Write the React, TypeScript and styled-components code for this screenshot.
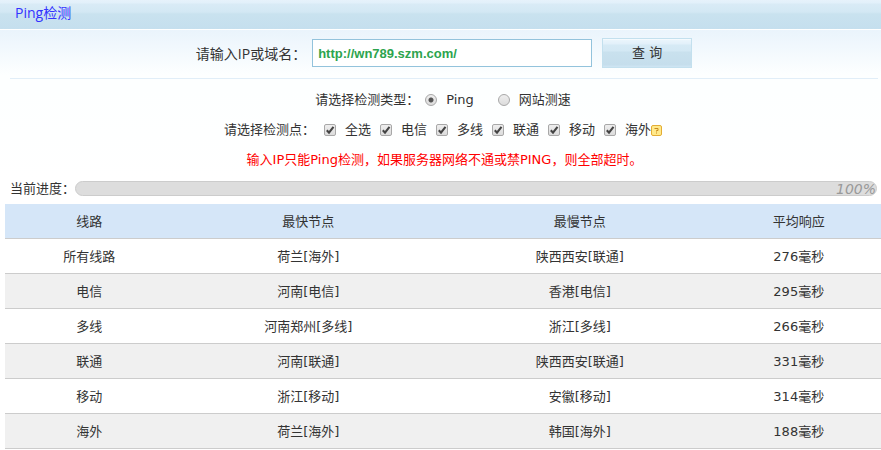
import React, { useState } from "react";
import styled, { createGlobalStyle } from "styled-components";

const GlobalStyle = createGlobalStyle`
  *, *::before, *::after { box-sizing: border-box; }
  body {
    margin: 0;
    background: #fff;
    color: #333;
    font: 13px/20px "DejaVu Sans", "Noto Sans CJK SC", sans-serif;
  }
`;

const TitleBar = styled.header`
  height: 30px;
  padding-left: 15px;
  border-bottom: 1px solid #fff;
  background: linear-gradient(#e6f2fb 0, #e2f0fa 3px, #d9ebf6 4px, #d3e8f4 12px, #c9e2ef 14px, #c5dfee 100%);
`;

const Title = styled.h1`
  margin: 0;
  font: 400 14px/26px "Open Sans", "Noto Sans CJK SC", sans-serif;
  color: #3333ff;
`;

const Form = styled.form`
  background: linear-gradient(#eaf4fc 0, #fdffff 45px, #fdffff 60px, #fff 100%);
`;

const QueryRow = styled.div`
  display: flex;
  align-items: center;
  justify-content: center;
  height: 49px;
  margin: 0 3px 0 10px;
  padding-bottom: 2px;
  border-bottom: 1px solid #e1eef8;
`;

const QueryLabel = styled.label`
  margin-right: 6px;
  padding-top: 2px;
  font-family: "Open Sans", "Noto Sans CJK SC", sans-serif;
  font-size: 14px;
`;

const AddressInput = styled.input`
  width: 280px;
  height: 28px;
  margin-right: 10px;
  padding: 0 5px;
  border: 1px solid #93c3dc;
  background: #fff;
  color: #2ca44e;
  font: bold 13px "Liberation Sans", sans-serif;
  outline: none;
`;

const QueryButton = styled.button`
  width: 90px;
  height: 30px;
  padding: 0;
  border: 1px solid #c3e0ee;
  background: linear-gradient(#fff 0, #eaf5fc 1px, #e2f0fa 5px, #d6eaf5 6px, #d3e8f4 12px, #c9e1ee 13px, #c5deec 26px, #cde4f2 27px);
  color: #333;
  font: inherit;
`;

const OptionRow = styled.div`
  display: flex;
  align-items: center;
  justify-content: center;
  height: 20px;
  margin-bottom: 10px;
`;

const Options = styled.div`
  padding: 11px 0 9px 5px;
`;

const Option = styled.label<{ $gap: number }>`
  display: flex;
  align-items: center;
  margin-left: ${(p) => p.$gap}px;
`;

const Choice = styled.input`
  appearance: none;
  flex: none;
  width: 12px;
  height: 12px;
  margin: 0 9px 0 0;
  border: 1px solid #a8a8a8;
  border-radius: ${(p) => (p.type === "radio" ? "50%" : "2px")};
  background: linear-gradient(#eee, #dcdcdc);

  &[type="radio"]:checked {
    background: radial-gradient(circle, #555 0 2px, transparent 3px), linear-gradient(#eee, #dcdcdc);
  }
  &[type="checkbox"]:checked {
    background: url("data:image/svg+xml,%3Csvg xmlns='http://www.w3.org/2000/svg' viewBox='0 0 10 10'%3E%3Cpath d='M1.8 5.2 4 7.6 8.5 1.8' fill='none' stroke='%23444' stroke-width='2.1'/%3E%3C/svg%3E"), linear-gradient(#eee, #dcdcdc);
  }
`;

const HelpIcon = styled.svg`
  flex: none;
  width: 11px;
  height: 11px;
  margin-top: 1px;
`;

const Notice = styled.p`
  margin: 0;
  padding-left: 3px;
  text-align: center;
  color: #f00;
`;

const ProgressRow = styled.div`
  display: flex;
  align-items: center;
  height: 25px;
  padding: 0 4px 6px 10px;
`;

const Track = styled.div`
  display: flex;
  align-items: center;
  justify-content: flex-end;
  flex: 1;
  height: 15px;
  border: 1px solid #ccc;
  border-radius: 8px;
  background: #ddd;
  color: #999;
  font-size: 14px;
  font-style: italic;
  white-space: nowrap;
`;

const Results = styled.table`
  width: calc(100% - 5px);
  margin-left: 5px;
  border-collapse: separate;
  border-spacing: 0;
  table-layout: fixed;
`;

const Column = styled.col<{ $share: number }>`
  width: ${(p) => p.$share}%;
`;

const Row = styled.tr`
  tbody &:nth-child(even) { background: #f0f0f0; }
  thead & { background: #d5e6f8; }
`;

const Cell = styled.td`
  height: 35px;
  padding: 2px 0 0 2px;
  border-bottom: 1px solid #ccc;
  text-align: center;
  font-weight: 400;
`;

const points = ["全选", "电信", "多线", "联通", "移动", "海外"];
const types = ["Ping", "网站测速"];
const headings = ["线路", "最快节点", "最慢节点", "平均响应"];
const results = [
  ["所有线路", "荷兰[海外]", "陕西西安[联通]", "276毫秒"],
  ["电信", "河南[电信]", "香港[电信]", "295毫秒"],
  ["多线", "河南郑州[多线]", "浙江[多线]", "266毫秒"],
  ["联通", "河南[联通]", "陕西西安[联通]", "331毫秒"],
  ["移动", "浙江[移动]", "安徽[移动]", "314毫秒"],
  ["海外", "荷兰[海外]", "韩国[海外]", "188毫秒"],
];

export default function App() {
  const [address, setAddress] = useState("http://wn789.szm.com/");
  return (
    <main lang="zh-CN">
      <GlobalStyle />
      <TitleBar>
        <Title>Ping检测</Title>
      </TitleBar>
      <Form onSubmit={(e) => e.preventDefault()}>
        <QueryRow>
          <QueryLabel htmlFor="address">请输入IP或域名：</QueryLabel>
          <AddressInput id="address" value={address} onChange={(e) => setAddress(e.target.value)} />
          <QueryButton type="submit">查 询</QueryButton>
        </QueryRow>
        <Options>
          <OptionRow role="radiogroup" aria-label="请选择检测类型">
            <span>请选择检测类型：</span>
            {types.map((type, i) => (
              <Option key={type} $gap={i ? 24 : 6}>
                <Choice type="radio" name="type" defaultChecked={i === 0} />
                {type}
              </Option>
            ))}
          </OptionRow>
          <OptionRow role="group" aria-label="请选择检测点">
            <span>请选择检测点：</span>
            {points.map((point) => (
              <Option key={point} $gap={9}>
                <Choice type="checkbox" defaultChecked />
                {point}
              </Option>
            ))}
            <HelpIcon viewBox="0 0 11 11" aria-hidden="true">
              <rect x="0.5" y="0.5" width="10" height="10" rx="1.5" fill="#ffe98a" stroke="#e3ad35" />
              <path d="M3.5 3.5h3.5v2H5.5v1M5.5 7.5v1" fill="none" stroke="#c88a1c" />
            </HelpIcon>
          </OptionRow>
          <Notice>输入IP只能Ping检测，如果服务器网络不通或禁PING，则全部超时。</Notice>
        </Options>
      </Form>
      <ProgressRow>
        <span id="progress-label">当前进度：</span>
        <Track role="progressbar" aria-labelledby="progress-label" aria-valuenow={100}>
          100%
        </Track>
      </ProgressRow>
      <Results>
        <colgroup>
          <Column $share={19} />
          <Column $share={31} />
          <Column $share={31} />
          <Column $share={19} />
        </colgroup>
        <thead>
          <Row>
            {headings.map((text) => (
              <Cell as="th" scope="col" key={text}>{text}</Cell>
            ))}
          </Row>
        </thead>
        <tbody>
          {results.map((row) => (
            <Row key={row[0]}>
              {row.map((text, i) => (
                <Cell key={i}>{text}</Cell>
              ))}
            </Row>
          ))}
        </tbody>
      </Results>
    </main>
  );
}
